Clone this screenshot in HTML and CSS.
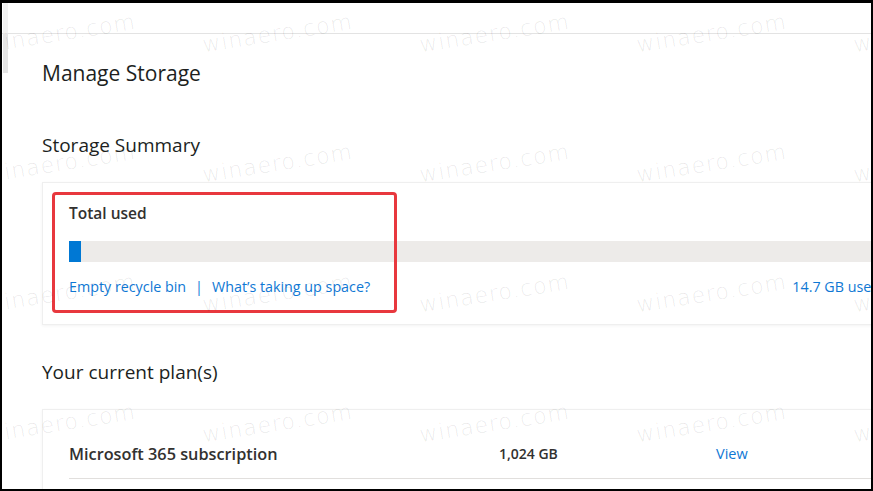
FILE: index.html
```html
<!DOCTYPE html>
<html lang="en">

<head>
    <meta charset="UTF-8">
    <meta name="viewport" content="width=device-width, initial-scale=1.0">
    <title>Manage Storage</title>
    <link rel="stylesheet" href="styles.css">
</head>

<body>
    <div class="frame">
        <!-- Faixa superior -->
        <div class="topbar"></div>
        <div class="rail-thumb"></div>

        <!-- Conteúdo -->
        <div class="content">
            <h1 class="page-title">Manage Storage</h1>

            <h2 class="section-title">Storage Summary</h2>
            <div class="card summary">
                <div class="total-label">Total used</div>
                <div class="usage-bar">
                    <div class="usage-fill" style="width: 1.5%"></div>
                </div>
                <div class="usage-links">
                    <div class="link-group">
                        <a href="#" class="link">Empty recycle bin</a>
                        <span class="sep">|</span>
                        <a href="#" class="link">What’s taking up space?</a>
                    </div>
                    <span class="link">14.7 GB used</span>
                </div>
                <!-- Marcação vermelha -->
                <div class="highlight"></div>
            </div>

            <h2 class="section-title plans-title">Your current plan(s)</h2>
            <div class="card plans">
                <div class="plan-row">
                    <span class="plan-name">Microsoft 365 subscription</span>
                    <span class="plan-size">1,024 GB</span>
                    <a href="#" class="link plan-view">View</a>
                </div>
            </div>
        </div>

        <!-- Marca de água -->
        <div class="watermarks">
            <span>winaero.com</span><span>winaero.com</span><span>winaero.com</span><span>winaero.com</span><span>winaero.com</span>
            <span>winaero.com</span><span>winaero.com</span><span>winaero.com</span><span>winaero.com</span><span>winaero.com</span>
            <span>winaero.com</span><span>winaero.com</span><span>winaero.com</span><span>winaero.com</span><span>winaero.com</span>
            <span>winaero.com</span><span>winaero.com</span><span>winaero.com</span><span>winaero.com</span><span>winaero.com</span>
        </div>
    </div>
</body>

</html>
```

FILE: styles.css
```css
body,
html {
    margin: 0;
    padding: 0;
    height: 100%;
    font-family: 'Open Sans', 'Noto Sans', sans-serif;
    color: #201f1e;
}

.frame {
    box-sizing: border-box;
    height: 491px;
    width: 873px;
    border: 2px solid #000;
    border-top-width: 3px;
    background-color: #fff;
    position: relative;
    overflow: hidden;
}

.topbar {
    height: 30px;
    border-bottom: 1px solid #e3e3e3;
}

.rail-thumb {
    position: absolute;
    top: 0;
    left: 1px;
    width: 5px;
    height: 70px;
    background: linear-gradient(#f1f1f1 0, #f1f1f1 30px, #e4e4e4 30px);
}

.content {
    padding: 24px 0 0 40px;
    width: 866px;
}

.page-title {
    margin: 0;
    font-size: 21px;
    line-height: 30px;
    font-weight: 400;
}

.section-title {
    margin: 43px 0 0;
    font-size: 19px;
    line-height: 28px;
    font-weight: 400;
}

.plans-title {
    margin-top: 33px;
}

.card {
    position: relative;
    margin-top: 23px;
    background-color: #fff;
    border: 1px solid #efefef;
    box-shadow: 0 1px 3px rgba(0, 0, 0, 0.05);
}

.summary {
    padding: 19px 27px 27px 26px;
}

.total-label {
    font-size: 15.5px;
    line-height: 22px;
    font-weight: 600;
    color: #323130;
}

.usage-bar {
    margin-top: 17px;
    height: 21px;
    background-color: #edebe9;
}

.usage-fill {
    height: 100%;
    background-color: #0078d4;
}

.usage-links {
    margin-top: 15px;
    display: flex;
    justify-content: space-between;
    font-size: 14.3px;
    line-height: 20px;
}

.link-group {
    display: flex;
    gap: 9px;
}

.link {
    color: #0f78d4;
    text-decoration: none;
}

.sep {
    color: #0f78d4;
}

.highlight {
    position: absolute;
    top: 9px;
    left: 9px;
    width: 339px;
    height: 115px;
    border: 3px solid #e8383e;
    border-radius: 4px;
}

.plans {
    padding: 32px 0 0 26px;
    height: 100px;
}

.plan-row {
    display: grid;
    grid-template-columns: 430px 217px auto;
    padding-bottom: 12px;
    border-bottom: 1px solid #e1dfdd;
    line-height: 24px;
}

.plan-name {
    font-size: 16.3px;
    font-weight: 600;
    color: #323130;
}

.plan-size {
    font-size: 14px;
    font-weight: 600;
    color: #323130;
}

.plan-view {
    font-size: 14.5px;
}

.watermarks {
    position: absolute;
    top: 0;
    left: 0;
    display: grid;
    grid-template-columns: repeat(5, 217px);
    grid-auto-rows: 130px;
    padding: 28px 0 0 2px;
    pointer-events: none;
}

.watermarks span {
    font-family: 'DejaVu Sans', sans-serif;
    font-weight: 200;
    font-size: 22px;
    letter-spacing: 1px;
    color: rgba(0, 0, 0, 0.09);
    transform: rotate(-9deg);
    transform-origin: left bottom;
    width: 145px;
}
```
